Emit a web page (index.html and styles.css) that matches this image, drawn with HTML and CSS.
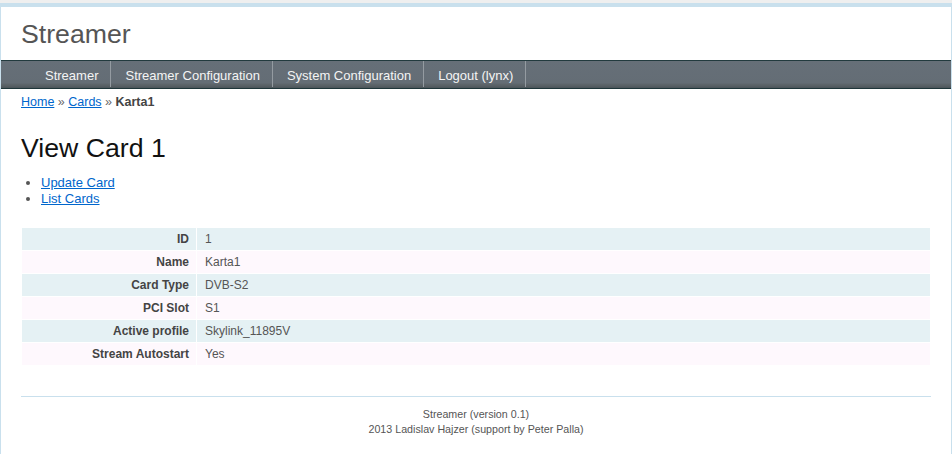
FILE: index.html
```html
<!DOCTYPE html>
<html lang="en">
<head>
<meta charset="utf-8">
<title>Streamer - View Card</title>
<link rel="stylesheet" href="styles.css">
</head>
<body>
<div class="page">
  <header class="header">
    <div class="logo">Streamer</div>
  </header>
  <nav class="mainmenu">
    <ul class="menu-list">
      <li class="menu-item"><a class="menu-link" href="#">Streamer</a></li>
      <li class="menu-item"><a class="menu-link" href="#">Streamer Configuration</a></li>
      <li class="menu-item"><a class="menu-link" href="#">System Configuration</a></li>
      <li class="menu-item"><a class="menu-link" href="#">Logout (lynx)</a></li>
    </ul>
  </nav>
  <div class="breadcrumbs">
    <a class="link" href="#">Home</a> <span class="sep">&raquo;</span> <a class="link" href="#">Cards</a> <span class="sep">&raquo;</span> <span class="current">Karta1</span>
  </div>
  <main class="content">
    <h1 class="title">View Card 1</h1>
    <ul class="operations">
      <li><a class="link" href="#">Update Card</a></li>
      <li><a class="link" href="#">List Cards</a></li>
    </ul>
    <table class="detail-view">
      <tr class="odd"><th>ID</th><td>1</td></tr>
      <tr class="even"><th>Name</th><td>Karta1</td></tr>
      <tr class="odd"><th>Card Type</th><td>DVB-S2</td></tr>
      <tr class="even"><th>PCI Slot</th><td>S1</td></tr>
      <tr class="odd"><th>Active profile</th><td>Skylink_11895V</td></tr>
      <tr class="even"><th>Stream Autostart</th><td>Yes</td></tr>
    </table>
  </main>
  <footer class="footer">
    <div>Streamer (version 0.1)</div>
    <div>2013 Ladislav Hajzer (support by Peter Palla)</div>
  </footer>
</div>
</body>
</html>
```
FILE: styles.css
```css
html {
  overflow: hidden;
}
body {
  margin: 0;
  padding: 0;
  background: #efefef;
  color: #555;
  font-family: "Liberation Sans", Arial, sans-serif;
  font-size: 13px;
}
.page {
  margin-top: 3px;
  background: #fff;
  border: 1px solid #c9e0ed;
}
.header {
  border-top: 3px solid #c9e0ed;
}
.logo {
  padding: 11px 20px 9px;
  font-size: 26.67px;
  line-height: 33px;
  color: #555;
}
.mainmenu {
  height: 29px;
  background: linear-gradient(to bottom,
    #223a3e 0, #223a3e 1px,
    #666f78 1px, #646d75 23px,
    #5e666c 24px, #575f64 26px,
    #4b5459 28px, #1f363a 28px, #1f363a 29px);
}
.menu-list {
  display: flex;
  margin: 0;
  padding: 0 0 0 30px;
  list-style: none;
  height: 29px;
}
.menu-item {
  display: flex;
}
.menu-link {
  display: block;
  padding: 4px 12px 0 14px;
  margin: 1px 0 2px;
  line-height: 22px;
  color: #f4f4f4;
  text-decoration: none;
  font-size: 13px;
  border-right: 1px solid #949ba1;
}
.breadcrumbs {
  padding: 5px 20px;
  font-size: 12.5px;
  line-height: 16px;
}
.link {
  color: #06c;
  text-decoration: underline;
}
.sep {
  color: #666;
}
.current {
  font-weight: bold;
  color: #444;
}
.content {
  padding: 20px;
}
.title {
  margin: 0 0 13.33px;
  font-size: 26.67px;
  line-height: 1;
  font-weight: normal;
  color: #111;
}
.operations {
  margin: 0 0 20px;
  padding-left: 20px;
  line-height: 16px;
  font-size: 13px;
}
.detail-view {
  width: 100%;
  border-collapse: collapse;
  background: #fff;
}
.detail-view th,
.detail-view td {
  font-size: 12px;
  line-height: 14px;
  border: 1px solid #fff;
  padding: 4px 7px;
  vertical-align: top;
}
.detail-view th {
  width: 160px;
  text-align: right;
  font-weight: bold;
  color: #444;
}
.detail-view td {
  padding-left: 8px;
  color: #555;
}
.odd {
  background: #e5f1f4;
}
.even {
  background: #fef8fd;
}
.footer {
  margin: 10px 20px 0;
  padding: 10px 10px 30px;
  border-top: 1px solid #c9e0ed;
  text-align: center;
  font-size: 10.7px;
  line-height: 15px;
  color: #555;
}
```
